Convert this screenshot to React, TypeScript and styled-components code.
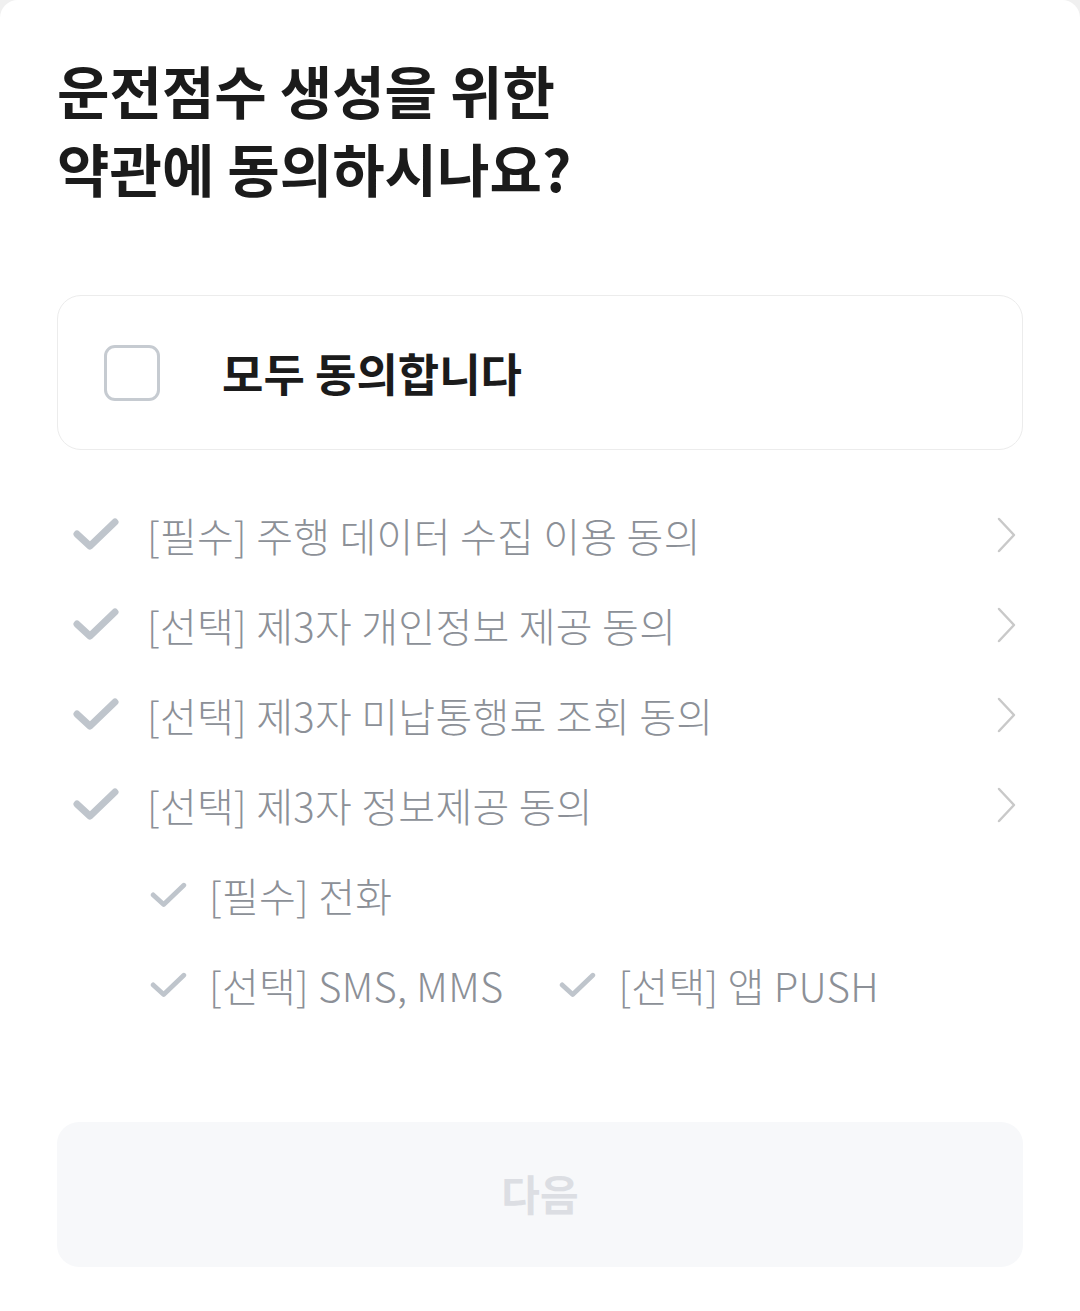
import React from "react";
import styled, { createGlobalStyle } from "styled-components";

const Global = createGlobalStyle`
  html, body { margin: 0; padding: 0; background: #f0f0f0; }
  body { font-family: "Noto Sans CJK KR", "Noto Sans", sans-serif; }
  * { box-sizing: border-box; }
`;

const Sheet = styled.div`
  width: 1080px;
  height: 1311px;
  background: #ffffff;
  border-radius: 18px 18px 0 0;
  padding: 50px 57px 0 57px;
  display: flex;
  flex-direction: column;
`;

const Title = styled.h1`
  margin: 0;
  font-size: 57px;
  line-height: 78px;
  font-weight: 700;
  color: #1b1b1b;
  letter-spacing: 0;
`;

const AllCard = styled.div`
  margin-top: 89px;
  height: 155px;
  border: 1.5px solid #ececec;
  border-radius: 24px;
  display: flex;
  align-items: center;
  padding-left: 46px;
  gap: 62px;
`;

const Box = styled.div`
  width: 56px;
  height: 56px;
  border: 3px solid #c6cbd1;
  border-radius: 11px;
`;

const AllText = styled.span`
  font-size: 45px;
  font-weight: 700;
  color: #1b1b1b;
  letter-spacing: 0;
`;

const List = styled.div`
  margin-top: 40px;
  display: flex;
  flex-direction: column;
`;

const Row = styled.div<{ $indent?: boolean }>`
  height: 90px;
  display: flex;
  align-items: center;
  padding-left: ${(p) => (p.$indent ? "93px" : "16px")};
  padding-right: 6px;
`;

const Item = styled.div<{ $small?: boolean }>`
  display: flex;
  align-items: center;
  gap: ${(p) => (p.$small ? "22px" : "28px")};
  margin-right: ${(p) => (p.$small ? "56px" : "0")};
`;

const Label = styled.span`
  font-size: 40px;
  font-weight: 300;
  color: #8c9097;
  letter-spacing: 0.3px;
  white-space: nowrap;
`;

const Chevron = styled.div`
  margin-left: auto;
  display: flex;
`;

const Spacer = styled.div`
  flex: 1;
`;

const NextButton = styled.button`
  margin-bottom: 44px;
  height: 145px;
  border: none;
  border-radius: 22px;
  background: #f7f8fa;
  color: #dcdee3;
  font-family: "Noto Sans CJK KR", sans-serif;
  font-size: 42px;
  font-weight: 700;
  padding-bottom: 6px;
  display: flex;
  align-items: center;
  justify-content: center;
`;

const Check = ({ size }: { size: number }) => (
  <svg width={size} height={size * 0.72} viewBox="0 0 46 33" fill="none">
    <path
      d="M4 16 L17 28 L42 4"
      stroke="#bfc5cc"
      strokeWidth={size > 40 ? 7 : 6}
      strokeLinecap="round"
      strokeLinejoin="round"
    />
  </svg>
);

const Arrow = () => (
  <svg width="20" height="36" viewBox="0 0 20 36" fill="none">
    <path d="M2 2 L17 18 L2 34" stroke="#c9c9c9" strokeWidth="2.5" strokeLinecap="round" strokeLinejoin="round" />
  </svg>
);

const main = [
  "[필수] 주행 데이터 수집 이용 동의",
  "[선택] 제3자 개인정보 제공 동의",
  "[선택] 제3자 미납통행료 조회 동의",
  "[선택] 제3자 정보제공 동의",
];

export default function App() {
  return (
    <>
      <Global />
      <Sheet>
        <Title>
          운전점수 생성을 위한
          <br />
          약관에 동의하시나요?
        </Title>
        <AllCard>
          <Box />
          <AllText>모두 동의합니다</AllText>
        </AllCard>
        <List>
          {main.map((t) => (
            <Row key={t}>
              <Item>
                <Check size={46} />
                <Label>{t}</Label>
              </Item>
              <Chevron>
                <Arrow />
              </Chevron>
            </Row>
          ))}
          <Row $indent>
            <Item $small>
              <Check size={37} />
              <Label>[필수] 전화</Label>
            </Item>
          </Row>
          <Row $indent>
            <Item $small>
              <Check size={37} />
              <Label>[선택] SMS, MMS</Label>
            </Item>
            <Item $small>
              <Check size={37} />
              <Label>[선택] 앱 PUSH</Label>
            </Item>
          </Row>
        </List>
        <Spacer />
        <NextButton>다음</NextButton>
      </Sheet>
    </>
  );
}
